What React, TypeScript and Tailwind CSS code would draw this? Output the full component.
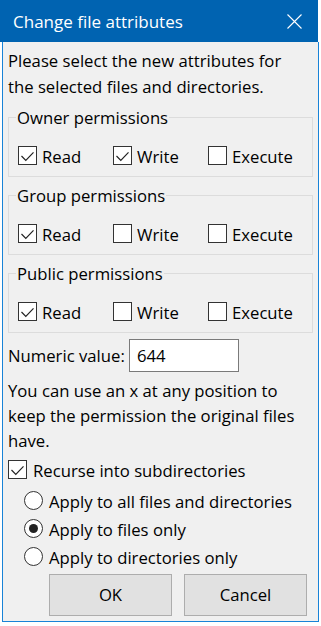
import React from "react";

function CheckBox({ checked }: { checked?: boolean }) {
  return (
    <span className="flex h-[19px] w-[19px] shrink-0 items-center justify-center border border-[#333333] bg-white">
      {checked && (
        <svg width="17" height="17" viewBox="0 0 17 17">
          <path d="M2.5 9 L6.8 13.3 L14.5 5.3" stroke="#222222" strokeWidth="1.2" fill="none" />
        </svg>
      )}
    </span>
  );
}

function Radio({ checked }: { checked?: boolean }) {
  return (
    <span className="flex h-[19px] w-[19px] shrink-0 items-center justify-center rounded-full border border-[#333333] bg-white">
      {checked && <span className="h-[9px] w-[9px] rounded-full bg-[#222222]" />}
    </span>
  );
}

function CheckItem({ label, checked }: { label: string; checked?: boolean }) {
  return (
    <div className="flex h-[19px] w-[95px] items-center gap-[5px]">
      <CheckBox checked={checked} />
      <span className="pt-[1px] leading-[19px]">{label}</span>
    </div>
  );
}

function Group({ title, perms, first }: { title: string; perms: boolean[]; first?: boolean }) {
  return (
    <fieldset
      className={`${first ? "mt-[6px]" : "mt-[7px]"} w-[305px] border border-[#dcdcdc] pb-[11px] pl-[9px]`}
    >
      <legend className="-ml-[2px] px-[1px] pt-[2px] leading-[20px]">{title}</legend>
      <div className="flex pt-[18px]">
        <CheckItem label="Read" checked={perms[0]} />
        <CheckItem label="Write" checked={perms[1]} />
        <CheckItem label="Execute" checked={perms[2]} />
      </div>
    </fieldset>
  );
}

function RadioItem({ label, checked }: { label: string; checked?: boolean }) {
  return (
    <div className="flex h-[19px] items-center gap-[6px]">
      <Radio checked={checked} />
      <span className="pt-[1px] leading-[19px]">{label}</span>
    </div>
  );
}

export default function App() {
  return (
    <div className="h-[626px] w-[321px] overflow-hidden bg-white font-['Open_Sans','Noto_Sans',sans-serif] text-[16.7px] text-black">
      <div className="w-[319px]">
        <div className="flex h-[42px] w-[318px] items-center justify-between bg-[#0063b1] pl-[13px] pr-[16px] text-white">
          <span className="pt-[2px] text-[17px] leading-[20px]">Change file attributes</span>
          <svg width="15" height="15" viewBox="0 0 15 15">
            <path d="M0.5 0.5 L14.5 14.5 M14.5 0.5 L0.5 14.5" stroke="white" strokeWidth="1.1" />
          </svg>
        </div>
        <div className="ml-[2px] flex w-[317px] flex-col border-x border-b border-[#1883d7] bg-[#f0f0f0] pb-[5px] pl-[5px]">
          <p className="mt-[6px] leading-[26px]">
            Please select the new attributes for
            <br />
            the selected files and directories.
          </p>
          <Group title="Owner permissions" perms={[true, true, false]} first />
          <Group title="Group permissions" perms={[true, false, false]} />
          <Group title="Public permissions" perms={[true, false, false]} />
          <div className="mt-[6px] flex items-center">
            <span className="w-[121px] pt-[1px] leading-[20px]">Numeric value:</span>
            <div className="flex h-[33px] w-[110px] items-center border border-[#7a7a7a] bg-white pl-[7px] pt-[1px]">
              644
            </div>
          </div>
          <p className="mt-[6px] leading-[25px]">
            You can use an x at any position to
            <br />
            keep the permission the original files
            <br />
            have.
          </p>
          <div className="mt-[7px] flex h-[19px] items-center gap-[6px]">
            <CheckBox checked />
            <span className="pt-[1px] leading-[19px]">Recurse into subdirectories</span>
          </div>
          <div className="mt-[12px] ml-[16px] flex flex-col gap-[9px]">
            <RadioItem label="Apply to all files and directories" />
            <RadioItem label="Apply to files only" checked />
            <RadioItem label="Apply to directories only" />
          </div>
          <div className="mt-[8px] ml-[41px] flex gap-[12px]">
            <button className="flex h-[42px] w-[123px] items-center justify-center border border-[#adadad] bg-[#e1e1e1]">
              OK
            </button>
            <button className="flex h-[42px] w-[123px] items-center justify-center border border-[#adadad] bg-[#e1e1e1]">
              Cancel
            </button>
          </div>
        </div>
      </div>
    </div>
  );
}
